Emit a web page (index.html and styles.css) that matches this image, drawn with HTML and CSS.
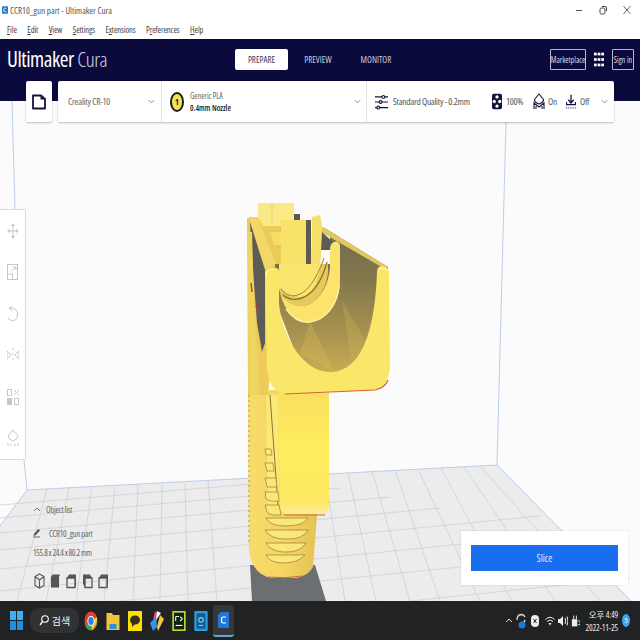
FILE: index.html
```html
<!DOCTYPE html>
<html lang="en">
<head>
<meta charset="utf-8">
<title>CCR10_gun part - Ultimaker Cura</title>
<link rel="stylesheet" href="styles.css">
</head>
<body>
<div class="app">
  <div class="titlebar">
    <div class="title-left">
      <svg class="app-icon" viewBox="0 0 7 9"><rect width="7" height="9" rx="1" fill="#1f78d6"/><path d="M5 2.500H3Q2 2.500 2 4.500T3 6.500H5" fill="none" stroke="#fff"/></svg>
      <span>CCR10_gun part - Ultimaker Cura</span>
    </div>
    <div class="win-controls">
      <svg viewBox="0 0 10 10"><path d="M2 5.500H8" stroke="#555"/></svg>
      <svg viewBox="0 0 10 10"><rect x="2" y="3" width="5" height="6" rx="1.500" fill="none" stroke="#444"/><path d="M4 1.500H7Q8.500 1.500 8.500 3V6" fill="none" stroke="#444"/></svg>
      <svg viewBox="0 0 10 10"><path d="M1.500 1L8.500 9M8.500 1L1.500 9" stroke="#555" stroke-width=".9"/></svg>
    </div>
  </div>
  <nav class="menubar">
    <span><u>F</u>ile</span><span><u>E</u>dit</span><span><u>V</u>iew</span><span><u>S</u>ettings</span><span>E<u>x</u>tensions</span><span>P<u>r</u>eferences</span><span><u>H</u>elp</span>
  </nav>
  <header class="topbar">
    <div class="logo"><b>Ultimaker</b> <i>Cura</i></div>
    <div class="stages">
      <span class="stage-btn active">PREPARE</span>
      <span class="stage-btn">PREVIEW</span>
      <span class="stage-btn">MONITOR</span>
    </div>
    <div class="account">
      <span class="outline market">Marketplace</span>
      <svg class="apps" viewBox="0 0 11 15" fill="#fff"><rect width="3" height="3"/><rect x="4" width="3" height="3"/><rect x="8" width="3" height="3"/><rect y="6" width="3" height="3"/><rect x="4" y="6" width="3" height="3"/><rect x="8" y="6" width="3" height="3"/><rect y="12" width="3" height="3"/><rect x="4" y="12" width="3" height="3"/><rect x="8" y="12" width="3" height="3"/></svg>
      <span class="outline sign">Sign in</span>
    </div>
  </header>

  <main class="stage">
    <svg class="scene" viewBox="0 101 640 500" preserveAspectRatio="none">
      <defs>
        <linearGradient id="inner" x1="0" y1="0" x2="0" y2="1">
          <stop offset="0" stop-color="#6f6a4e"/><stop offset=".35" stop-color="#84784c"/><stop offset=".7" stop-color="#a8934f"/><stop offset="1" stop-color="#d0b054"/>
        </linearGradient>
        <linearGradient id="plate" x1="0" y1="0" x2="0" y2="1">
          <stop offset="0" stop-color="#f9e060"/><stop offset=".5" stop-color="#ffee5c"/><stop offset=".9" stop-color="#fce764"/><stop offset="1" stop-color="#fdee9a"/>
        </linearGradient>
        <linearGradient id="grip" x1="0" y1="0" x2="1" y2="0">
          <stop offset="0" stop-color="#f8dc6c"/><stop offset=".5" stop-color="#f5d562"/><stop offset="1" stop-color="#e4c256"/>
        </linearGradient>
      </defs>
      <rect x="0" y="101" width="640" height="500" fill="#fbfbfc"/>
      <path d="M27 490 L213 480 L497 465 L640 609 V601 H0 V526 Z" fill="#ececec"/>
      <g class="grid-h">
        <path d="M0 505L300 480"/><path d="M0 518L340 488"/><path d="M0 533L390 497"/><path d="M0 550L440 508"/><path d="M0 569L540 516"/><path d="M0 591L580 532"/><path d="M120 601L600 553"/><path d="M410 601L630 578"/>
      </g>
      <g class="grid-v">
        <path d="M47 489L17 601"/><path d="M69 488L46 601"/><path d="M92 487L76 601"/><path d="M115 486L104 601"/><path d="M138 485L133 601"/><path d="M162 484L160 601"/><path d="M185 483L188 601"/><path d="M208 481L217 601"/><path d="M325 474L345 601"/><path d="M348 473L376 601"/><path d="M372 471L410 601"/><path d="M395 470L440 601"/><path d="M418 469L480 601"/><path d="M441 468L512 601"/><path d="M464 467L555 601"/><path d="M480 466L600 601"/>
      </g>
      <g class="edges">
        <path d="M12 101L15 210M24 460L27 490L0 526M27 490L497 465L636 606M506 122L497 465"/>
      </g>
      <path d="M250 565H315L326 601H252Z" fill="#6c6f72"/>

      <!-- grip -->
      <path d="M248 390H317V515L313 567Q308 576 296 578H272Q252 575 249 550Z" fill="url(#grip)"/>
      <path d="M249 330V545" stroke="#cdae4a" stroke-width="1.500" stroke-dasharray="2 3" fill="none"/>
      <path d="M266 395H278L279 505H268Z" fill="#fbe876"/>
      <path d="M270 395L278 505" stroke="#8a7430" stroke-width="1" fill="none"/>
      <g fill="#fbe67a" stroke="#937c3a" stroke-width=".7">
        <path d="M265 449H271L272 455H266Z"/>
        <path d="M265 463H273L274 471H267Z"/>
        <path d="M265 478H276L277 487H267Z"/>
        <path d="M265 492H278L279 501Q270 502 266 499Z"/>
        <path d="M265 505H279L281 515Q270 516 267 512Z"/>
        <path d="M266 518H308Q304 526 285 526Q270 526 266 518Z"/>
        <path d="M265 530H308Q303 540 285 539Q270 539 265 530Z"/>
        <path d="M266 543H306Q300 553 283 552Q270 551 266 543Z"/>
        <path d="M266 555H305Q298 563 283 563Q270 563 266 555Z"/>
      </g>
      <path d="M268 577Q285 579 302 576" stroke="#d9622e" fill="none"/>
      <!-- plate -->
      <path d="M278 393H329V505Q329 514 320 514H288Q281 514 280 505Z" fill="url(#plate)"/>
      <path d="M284 515H325" stroke="#d9622e" fill="none"/>

      <!-- left side wall -->
      <path d="M247 218H258L281 266L268 395H248Z" fill="#eccb5c"/>
      <path d="M250 222L265 270V343L262 352L257 323L252 257Z" fill="#5c5b55"/>
      <path d="M248 232L252 232L254 300L260 395H249Z" fill="#f0d462"/>
      <path d="M251 283L252 292M256 306L258 312" stroke="#c73f2a" stroke-width="1.500"/>
      <!-- rear blocks -->
      <path d="M258 203H294V220H281V232H263L258 222Z" fill="#fbe887"/>
      <path d="M272 204V222" stroke="#e4cf78"/>
      <path d="M249 217H258L279 262L266 270Z" fill="#f2d866"/>
      <path d="M258 218L263 226H281V266H277Z" fill="#ebca58"/>
      <path d="M270 232H281V245H274Z" fill="#f7dd66"/>
      <path d="M281 220H306V266H281Z" fill="#f9e26a"/>
      <path d="M306 220H311V266H306Z" fill="#5d5b50"/>
      <path d="M312 217L320 215L323 230L320 266H311Z" fill="#f7e06a"/>
      <path d="M294 214H300V220H294Z" fill="#5c5a4d"/>
      <!-- trough interior -->
      <path d="M323 227L388 267L380 300L370 345L340 380L300 365L275 300V264H330V235Z" fill="url(#inner)"/>
      <path d="M342 300L368 345L352 364Z" fill="#d8bb5a" opacity=".25"/>
      <path d="M310 322L335 372L300 354Z" fill="#d8bb5a" opacity=".35"/>
      <path d="M323 227L388 267L385 269L321 232Z" fill="#e2c65e"/>
      <path d="M322 232L334 243L330 250H321Z" fill="#5e5c52"/>
      <!-- far U -->
      <path d="M279 264H328V272C326 292 314 306 302 306C292 306 284 301 280 292Z" fill="#e6c95a"/>
      <path d="M279 264H321C318 285 310 297 300 297C291 297 284 293 280 286Z" fill="#f9e46d"/>
      <path d="M281 289C288 299 308 304 324 258" fill="none" stroke="#9a8540" stroke-width="1"/>
      <path d="M283 295C293 304 316 302 327 262" fill="none" stroke="#85733a" stroke-width="1.200"/>
      <path d="M279 264V288C283 310 295 322 307 322C325 322 340 305 340 280V245Q338 240 334 242Q330 243 330 250V268C328 290 315 306 302 306C292 306 283 300 280 292L281 264Z" fill="#fbe36c"/>
      <path d="M286 309C294 320 303 323 310 322C325 320 338 305 339 285" fill="none" stroke="#fff0a0" stroke-width="1.500"/>
      <!-- front face -->
      <path d="M265 276Q265 268 272 268H276Q279 268 279 272V303C281 330 300 372 330 372C362 372 375 330 377 272Q377 266 382 266Q389 266 389 274L390 366Q389 386 375 390L285 394Q270 392 267 370Z" fill="#fae668"/>
      <path d="M285 394L375 390Q385 388 388 380" stroke="#d9622e" stroke-width="1.200" fill="none"/>
      <path d="M266 276Q266 269 274 269M379 270Q382 267 387 270" stroke="#fff2a0" fill="none" stroke-width="1.500"/>
    </svg>

    <div class="toolbar">
      <button class="file-btn" type="button">
        <svg viewBox="0 0 14 16"><path d="M1 1.500H9L13 5V14.500H1Z" fill="none" stroke="#14143f" stroke-width="1.800" stroke-linejoin="round"/><path d="M8.500 1.500L13 5.500H8.500Z" fill="#14143f"/></svg>
      </button>
      <div class="config">
        <div class="cell printer">
          <span>Creality CR-10</span>
          <svg class="chev" viewBox="0 0 8 5"><path d="M1 1L4 4L7 1"/></svg>
        </div>
        <div class="cell material">
          <span class="extruder">1</span>
          <div class="mat-text"><span>Generic PLA</span><b>0.4mm Nozzle</b></div>
          <svg class="chev" viewBox="0 0 8 5"><path d="M1 1L4 4L7 1"/></svg>
        </div>
        <div class="cell settings">
          <svg class="sliders" viewBox="0 0 14 16"><g stroke="#14143f" stroke-width="1.200" fill="#fff"><path d="M0 2.500H14M0 8H14M0 14H14"/><circle cx="9" cy="2.500" r="1.500"/><circle cx="6" cy="8" r="1.500"/><circle cx="3.500" cy="14" r="1.500"/></g></svg>
          <span class="quality">Standard Quality - 0.2mm</span>
          <svg class="infill" viewBox="0 0 11 17"><rect width="11" height="17" rx="2" fill="#14143f"/><g fill="#fff"><circle cx="5.500" cy="3.500" r="1.800"/><circle cx="5.500" cy="13.500" r="1.800"/><circle cx="2.500" cy="8.500" r="1.800"/><circle cx="8.500" cy="8.500" r="1.800"/></g></svg>
          <span class="val v100">100%</span>
          <svg class="support" viewBox="0 0 12 17"><g fill="none" stroke="#14143f" stroke-width="1.100"><path d="M6 1L10.500 6.500Q11 9 6 11Q1 9 1.500 6.500Z"/><path d="M1 16V10L6 14L11 10V16M3 16V13M9 16V13"/></g></svg>
          <span class="val von">On</span>
          <svg class="adhesion" viewBox="0 0 11 16"><g fill="none" stroke="#14143f" stroke-width="1.400"><path d="M5.500 0V8M2.500 5.500L5.500 9L8.500 5.500"/><path d="M.5 8V11H10.500V8"/></g><path d="M0 14.500H11" stroke="#14143f" stroke-dasharray="1 1"/></svg>
          <span class="val voff">Off</span>
          <svg class="chev" viewBox="0 0 8 5"><path d="M1 1L4 4L7 1"/></svg>
        </div>
      </div>
    </div>

    <aside class="tools">
      <svg viewBox="0 0 12 16"><path d="M6 0L8 3H4ZM6 16L4 13H8ZM0 8L3 6V10ZM12 8L9 10V6Z M5.500 3H6.500V13H5.500ZM3 7.500H9V8.500H3Z"/></svg>
      <svg viewBox="0 0 12 16"><g fill="none" stroke="currentColor"><rect x=".5" y=".5" width="10" height="15"/><rect x=".5" y="10" width="5" height="5.500"/><path d="M5 7L9 3M6 3H9V6"/></g></svg>
      <svg viewBox="0 0 12 16"><g fill="none" stroke="currentColor"><path d="M3 2Q11 2 10.500 9Q10 15 5 14.500Q2 14 1 12"/><path d="M5 0L2 2L5 5"/></g></svg>
      <svg viewBox="0 0 12 16"><g stroke="currentColor" fill="none"><path d="M0 4L4 8L0 12ZM12 4L8 8L12 12Z"/><path d="M6 1V15" stroke-dasharray="2 3"/></g></svg>
      <svg viewBox="0 0 12 16"><g fill="currentColor"><rect x=".5" y=".5" width="4" height="6" fill="none" stroke="currentColor"/><path d="M7 1L12 6M12 1L7 6" stroke="currentColor"/><rect y="9" width="5" height="7"/><rect x="7.500" y="9.500" width="4" height="6" fill="none" stroke="currentColor"/></g></svg>
      <svg viewBox="0 0 12 16"><g fill="none" stroke="currentColor"><path d="M6 0L11 6Q11 9 6 11Q1 9 1 6Z"/><path d="M1 16V13M4 16V14M8 16V14M11 16V13"/></g></svg>
    </aside>

    <section class="objects">
      <div class="obj-head"><svg viewBox="0 0 8 5"><path d="M1 4L4 1L7 4"/></svg><span>Object list</span></div>
      <div class="obj-name">
        <svg viewBox="0 0 9 10"><path d="M1 6L6 .5L8 2L3 7.500L.5 8Z" fill="#555"/><path d="M0 9.500H8" stroke="#555"/></svg>
        <span>CCR10_gun part</span>
      </div>
      <div class="obj-size">155.8 x 24.4 x 80.2 mm</div>
      <div class="views">
        <svg viewBox="0 0 11 16"><g fill="none" stroke="#555" stroke-width="1.100"><path d="M5.500 1L10 3.500V12.500L5.500 15L1 12.500V3.500ZM1 3.500L5.500 7L10 3.500M5.500 7V15"/></g></svg>
        <svg viewBox="0 0 11 16"><path d="M2.500 1.500H10L9 4V14.500H1V4Z" fill="#555"/></svg>
        <svg viewBox="0 0 11 16"><path d="M1 5L3 1.500H10V12L9 14.500V5Z" fill="#555"/><g fill="none" stroke="#555" stroke-width="1.300"><path d="M1 5H9V14.500H1Z"/></g></svg>
        <svg viewBox="0 0 11 16"><path d="M1 1.500H8L10 5H3V14.500L1 11Z" fill="#555"/><g fill="none" stroke="#555" stroke-width="1.300"><path d="M3 5H10V14.500H3Z"/></g></svg>
        <svg viewBox="0 0 11 16"><path d="M1 5L3 1.500H10V12L9 14.500V5Z" fill="#555"/><g fill="none" stroke="#555" stroke-width="1.300"><path d="M1 5H9V14.500H1Z"/></g></svg>
      </div>
    </section>

    <section class="slice-card"><button class="slice" type="button">Slice</button></section>
  </main>

  <footer class="taskbar">
    <svg class="start" viewBox="0 0 13 19"><g fill="#39b4f0"><rect width="6" height="9"/><rect x="7" width="6" height="9"/><rect y="10" width="6" height="9" fill="#1e90e0"/><rect x="7" y="10" width="6" height="9" fill="#1e90e0"/></g></svg>
    <div class="search">
      <svg viewBox="0 0 10 11"><circle cx="6" cy="4" r="3.300" fill="none" stroke="#fff" stroke-width="1.100"/><path d="M3.500 6.500L1 10" stroke="#fff" stroke-width="1.300"/></svg>
      <span>검색</span>
    </div>
    <div class="apps-row">
      <svg viewBox="0 0 14 20"><ellipse cx="7" cy="10" rx="6.500" ry="9.500" fill="#e0402f"/><path d="M7 10L13 7V14L7 19.500Q2 18 1.500 15Z" fill="#32a651"/><path d="M7 10L13 6Q14 13 8 19.500Z" fill="#f8c92c"/><ellipse cx="7" cy="10" rx="3.600" ry="5" fill="#fff"/><ellipse cx="7" cy="10" rx="2.700" ry="4" fill="#2f7fe8"/></svg>
      <svg viewBox="0 0 14 20"><path d="M.5 2H6L7 4H13.500V19H.5Z" fill="#f5c33b"/><rect x="3.500" y="13" width="7" height="5" fill="#2b8fd6"/></svg>
      <svg viewBox="0 0 14 20"><rect width="14" height="20" fill="#fce000"/><ellipse cx="7" cy="9" rx="5" ry="4.500" fill="#3b2e1e"/><path d="M4 13L4 16L7 13Z" fill="#3b2e1e"/></svg>
      <svg viewBox="0 0 14 20"><path d="M5 0L8 3L6 12L3 9Z" fill="#e04a72"/><path d="M7 0L11 2L6 9Z" fill="#fff"/><path d="M0 12L6 6L7 16L3 20Z" fill="#3692e8"/><path d="M7 16L10 4L14 8L8 20Z" fill="#f4c543"/></svg>
      <svg viewBox="0 0 12 18"><rect width="12" height="18" fill="#b8d930"/><rect x="1.500" y="1.500" width="9" height="15" fill="#141f14"/><path d="M3 5H6M3 5V9M7 5L9 7L7 9" stroke="#cfe" fill="none"/><path d="M3 13H9" stroke="#fff"/></svg>
      <svg viewBox="0 0 12 18"><rect width="12" height="18" rx="1" fill="#2aa0de"/><rect x="2" y="2" width="8" height="14" fill="#145d90"/><circle cx="6" cy="8" r="2" fill="none" stroke="#7fd0f5"/><path d="M4 13H8" stroke="#7fd0f5"/></svg>
      <div class="active-app">
        <svg viewBox="0 0 11 16"><path d="M0 3L3 0H11V16H0Z" fill="#1f78d6"/><path d="M8 5H5Q3.500 5 3.500 8T5 11H8" fill="none" stroke="#fff" stroke-width="1.200"/></svg>
      </div>
    </div>
    <div class="tray">
      <svg class="t-up" viewBox="0 0 8 5"><path d="M1 4L4 1L7 4"/></svg>
      <svg class="t-a" viewBox="0 0 10 16"><path d="M1 7Q1 2 5 1.500Q8 1.500 9 4M9 7Q8 11 3 11" fill="none" stroke="#d8d8d8" stroke-width="1.300"/><circle cx="6" cy="12" r="3.500" fill="#1f78d6"/></svg>
      <svg class="t-b" viewBox="0 0 8 12"><rect width="8" height="12" rx="4" fill="#eee"/><path d="M2.500 4L5.500 8M5.500 4L2.500 8" stroke="#222"/></svg>
      <svg class="t-c" viewBox="0 0 10 10"><g fill="none" stroke="#eee"><path d="M.5 3.500Q5 -1 9.500 3.500M2 5.500Q5 2.500 8 5.500"/></g><path d="M3.500 7L5 9.500L6.500 7Z" fill="#eee"/></svg>
      <svg class="t-d" viewBox="0 0 10 12"><path d="M0 4H2L5 1V11L2 8H0Z" fill="#eee"/><path d="M7 3Q8.500 6 7 9M9 1.500Q11 6 9 10.500" fill="none" stroke="#eee"/></svg>
      <svg class="t-e" viewBox="0 0 10 12"><rect x="1" y="4" width="6" height="8" fill="#eee"/><path d="M3 0V4M6 0V4M8 6H10V10H8" stroke="#eee"/></svg>
      <div class="clock"><span>오후 4:49</span><span>2022-11-25</span></div>
      <span class="badge">5</span>
    </div>
  </footer>
</div>
</body>
</html>
```

FILE: styles.css
```css
* { box-sizing: border-box; }
html, body { margin: 0; padding: 0; }
body { font-family: "Open Sans", "Noto Sans", sans-serif; font-stretch: 75%; color: #444; }
svg { display: block; flex: none; }
button { font: inherit; border: 0; padding: 0; }

.app { width: 640px; height: 640px; display: flex; flex-direction: column; overflow: hidden; background: #fff; }

.titlebar { height: 20px; display: flex; justify-content: space-between; align-items: center; padding: 0 8px 0 2px; font-size: 9px; color: #555; }
.title-left { display: flex; align-items: center; gap: 2px; }
.app-icon { width: 6px; height: 8px; }
.win-controls { display: flex; gap: 14px; }
.win-controls svg { width: 10px; height: 10px; }

.menubar { height: 19px; display: flex; align-items: center; gap: 10.500px; padding-left: 7px; font-size: 8.500px; letter-spacing: -.1px; color: #444; }
.menubar u { text-underline-offset: 1px; }

.topbar { height: 62px; background: #0a0a3c; color: #fff; padding: 10px 6px 0 7px; display: flex; align-items: flex-start; flex: none; position: relative; }
.logo { width: 228px; font-size: 21px; line-height: 21px; white-space: nowrap; letter-spacing: -.45px; }
.logo b { font-weight: 500; }
.logo i { font-style: normal; font-weight: 300; color: #d8d8e8; }
.stages { display: flex; align-items: center; font-size: 9px; color: #c9c9dc; }
.stage-btn { width: 58px; height: 21px; display: flex; align-items: center; justify-content: center; }
.stage-btn.active { width: 53px; margin-right: 1px; background: #fff; color: #3a3a60; border-radius: 2px; }
.account { margin-left: auto; display: flex; align-items: center; gap: 8px; font-size: 8px; color: #dcdce8; }
.outline { height: 21px; border: 1px solid #b8bacc; border-radius: 1px; display: flex; align-items: center; justify-content: center; }
.market { width: 36px; }
.sign { width: 22px; }
.apps { width: 10px; height: 15px; }

.stage { flex: 1; position: relative; min-height: 0; }
.scene { position: absolute; inset: 0; width: 100%; height: 100%; }
.grid-h path, .grid-v path { stroke: #cdd0d4; stroke-width: .8; fill: none; }
.edges path { stroke: #b6c8e6; stroke-width: .9; fill: none; }

.toolbar { position: absolute; left: 26px; top: -20px; display: flex; gap: 6px; }
.file-btn { width: 26px; height: 41px; background: #fff; border-radius: 2px; box-shadow: 0 1px 2px rgba(0,0,0,.25); display: flex; align-items: center; justify-content: center; }
.file-btn svg { width: 14px; height: 16px; }
.config { width: 556px; height: 41px; background: #fff; border-radius: 2px; box-shadow: 0 1px 2px rgba(0,0,0,.25); display: flex; }
.cell { display: flex; align-items: center; height: 100%; border-right: 1px solid #e3e3e8; }
.cell:last-child { border-right: 0; }
.chev { width: 7px; height: 5px; margin-left: auto; }
.chev path, .obj-head path, .t-up path { fill: none; stroke: #777; stroke-width: 1; }
.printer { width: 104px; padding: 0 6px 0 10px; font-size: 9.500px; letter-spacing: -.25px; color: #666; }
.material { width: 205px; padding: 0 5px 0 8px; }
.extruder { width: 14px; height: 20px; border-radius: 50%; background: #f5e45a; border: 2px solid #1c1c1c; font-size: 8px; font-weight: 700; color: #111; display: flex; align-items: center; justify-content: center; margin-right: 6px; }
.mat-text { display: flex; flex-direction: column; gap: 3px; font-size: 8px; line-height: 9px; color: #666; }
.mat-text b { color: #222; font-weight: 600; }
.settings { flex: 1; padding: 0 6px 0 8px; font-size: 9.500px; letter-spacing: -.3px; color: #555; }
.sliders { width: 13px; height: 16px; margin-right: 5px; }
.quality { width: 99px; white-space: nowrap; }
.infill { width: 10px; height: 17px; margin-right: 4px; }
.val { white-space: nowrap; }
.v100 { width: 27px; }
.support { width: 12px; height: 17px; margin-right: 3px; }
.von { width: 18px; }
.adhesion { width: 10px; height: 16px; margin-right: 4px; }

.tools { position: absolute; left: 0; top: 108px; width: 26px; height: 251px; background: #fff; border: 1px solid #d8dbe2; border-left: 0; border-radius: 0 2px 2px 0; display: flex; flex-direction: column; align-items: center; justify-content: space-between; padding: 13px 0; color: #c3c8cf; }
.tools svg { width: 12px; height: 16px; fill: currentColor; }

.objects { position: absolute; left: 33px; top: 402px; font-size: 8.500px; letter-spacing: -.25px; color: #666; }
.obj-head { display: flex; align-items: center; gap: 5px; height: 12px; }
.obj-head svg { width: 8px; height: 5px; }
.obj-name { display: flex; align-items: center; gap: 8px; height: 12px; margin-top: 12px; }
.obj-name svg { width: 8px; height: 10px; }
.obj-size { height: 12px; margin-top: 8px; line-height: 12px; letter-spacing: -.4px; white-space: nowrap; }
.views { display: flex; gap: 5px; margin-top: 14px; margin-left: 1px; }
.views svg { width: 11px; height: 16px; }

.slice-card { position: absolute; left: 461px; top: 430px; width: 167px; height: 54px; background: #fff; padding: 14px 10px 0; box-shadow: 0 0 1px rgba(0,0,0,.25); }
.slice { display: block; width: 147px; height: 26px; background: #196ef0; color: #dfeaff; font-size: 10px; }

.taskbar { height: 39px; flex: none; background: #212223; color: #eee; display: flex; align-items: center; position: relative; padding-left: 10px; }
.start { width: 13px; height: 19px; margin-right: 7px; }
.search { width: 49px; height: 25px; background: #303234; border-radius: 10px; display: flex; align-items: center; justify-content: center; gap: 3px; font: 10px "Noto Sans CJK KR", sans-serif; }
.search svg { width: 10px; height: 11px; }
.apps-row { display: flex; align-items: center; gap: 8px; margin-left: 5px; }
.apps-row svg { width: 14px; height: 20px; }
.active-app { width: 21px; height: 32px; margin-left: -3px; background: #35373a; border-radius: 3px; display: flex; align-items: center; justify-content: center; border-bottom: 2px solid #5aa9e0; }
.active-app svg { width: 11px; height: 16px; }
.tray { margin-left: auto; display: flex; align-items: center; padding-right: 10px; font-size: 9px; }
.t-up { width: 8px; height: 5px; margin-right: 3px; }
.t-up path { stroke: #ddd; }
.t-a { width: 10px; height: 16px; margin-right: 5px; }
.t-b { width: 8px; height: 12px; margin-right: 6px; }
.t-c { width: 10px; height: 10px; margin-right: 3px; }
.t-d { width: 10px; height: 12px; margin-right: 3px; }
.t-e { width: 9px; height: 12px; margin-right: 5px; }
.clock { width: 33px; display: flex; flex-direction: column; align-items: flex-end; gap: 2px; font: 8.500px/11px "Open Sans", "Noto Sans CJK KR", sans-serif; font-stretch: 75%; letter-spacing: -.1px; white-space: nowrap; }
.badge { width: 8px; height: 13px; margin-left: 4px; border-radius: 50%; background: #3aa8ea; color: #fff; font-size: 7px; display: flex; align-items: center; justify-content: center; }
```
